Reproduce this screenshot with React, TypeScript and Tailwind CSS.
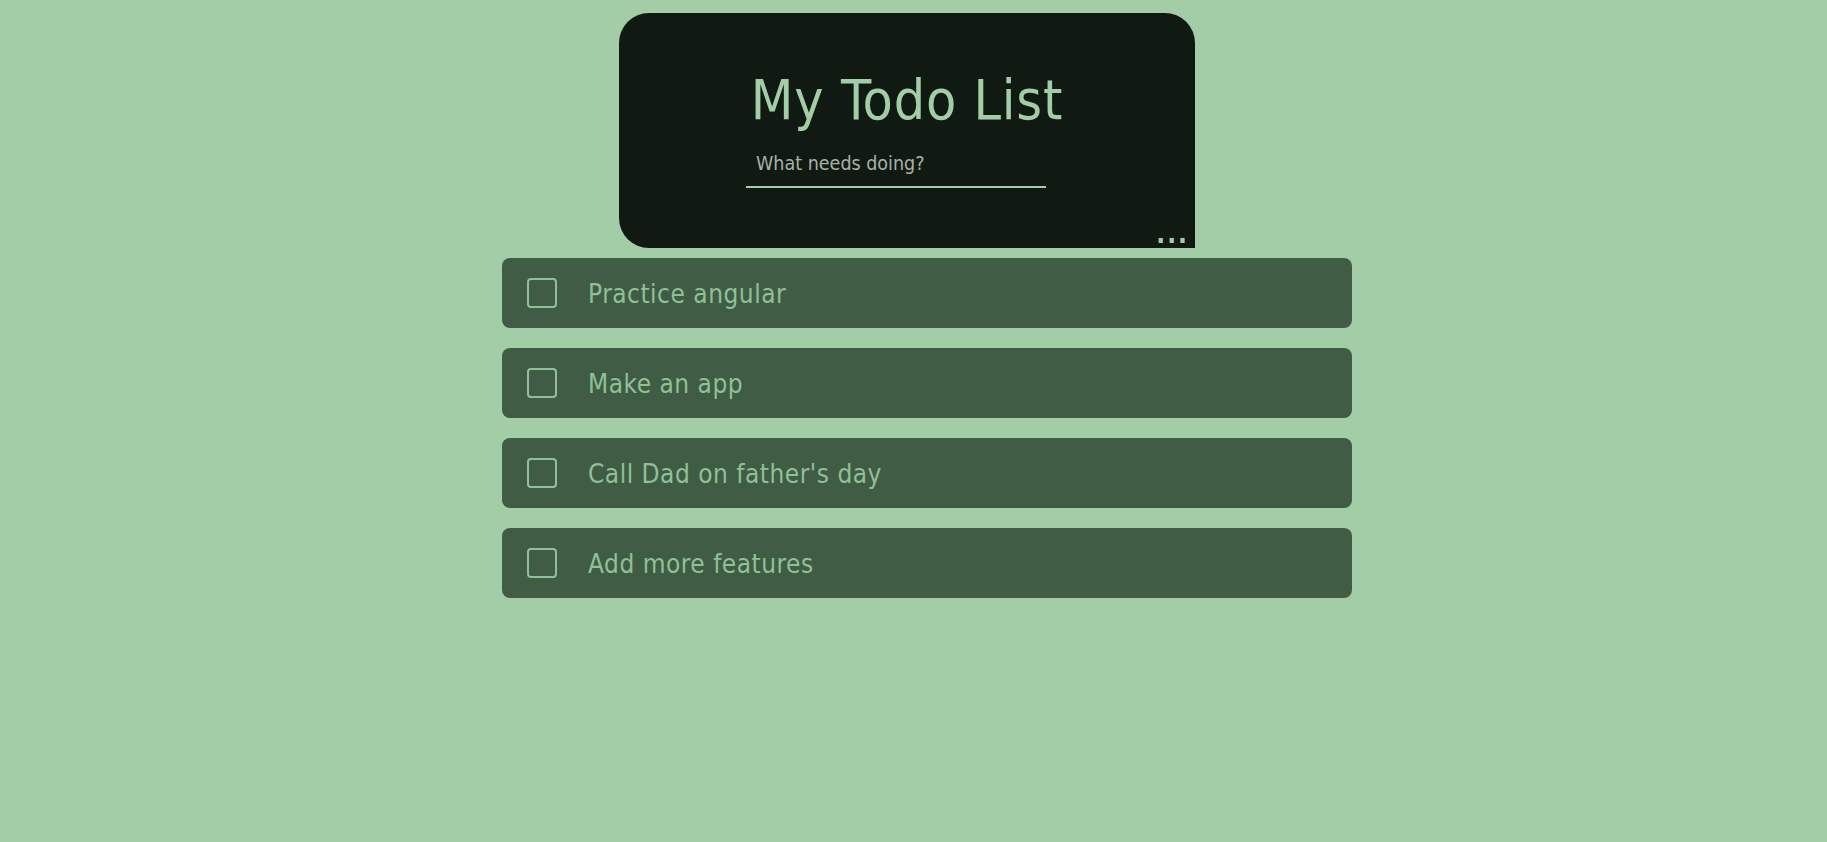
import { useState } from 'react'

const font = { fontFamily: '"DejaVu Sans Condensed", "DejaVu Sans", Verdana, sans-serif' }

const initialTodos = ['Practice angular', 'Make an app', "Call Dad on father's day", 'Add more features']

export default function App() {
  const [todos] = useState(initialTodos)
  const [done, setDone] = useState<boolean[]>(initialTodos.map(() => false))
  const [text, setText] = useState('')

  return (
    <div className="min-h-[842px] w-full bg-[#a2cda6] flex justify-center pl-[27px] pt-[13px]" style={font}>
      <div className="w-[850px] flex flex-col">
        {/* header card */}
        <div className="relative ml-[117px] w-[576px] h-[235px] bg-[#111a12] rounded-[30px] rounded-br-none flex flex-col items-center pt-[60px]">
          <h1 className="text-[55px] leading-none tracking-[0.8px] text-[#a2cda6]">My Todo List</h1>
          <input
            value={text}
            onChange={e => setText(e.target.value)}
            placeholder="What needs doing?"
            className="self-start ml-[127px] mt-[12px] w-[300px] h-12 pl-[10px] bg-transparent border-b-[2.5px] border-[#a2cda6] text-[19.5px] text-[#a8b0a8] placeholder:text-[#a8b0a8] outline-none"
          />
          <span className="absolute right-[6px] bottom-[1px] text-[26px] font-bold leading-none tracking-[2px] text-[#a2cda6]">...</span>
        </div>

        {/* todo items */}
        <div className="flex flex-col gap-5 mt-[10px]">
          {todos.map((t, i) => (
            <div key={t} className="h-[70px] bg-[#405c45] rounded-lg flex items-center pl-[25px]">
              <button
                onClick={() => setDone(d => d.map((v, j) => (j === i ? !v : v)))}
                className="w-[30px] h-[30px] rounded-[4px] border-2 border-[#8fc096] shrink-0"
              />
              <span className="ml-[31px] pt-[3px] text-[26px] tracking-[0.5px] text-[#8fc096]">{t}</span>
            </div>
          ))}
        </div>
      </div>
    </div>
  )
}
